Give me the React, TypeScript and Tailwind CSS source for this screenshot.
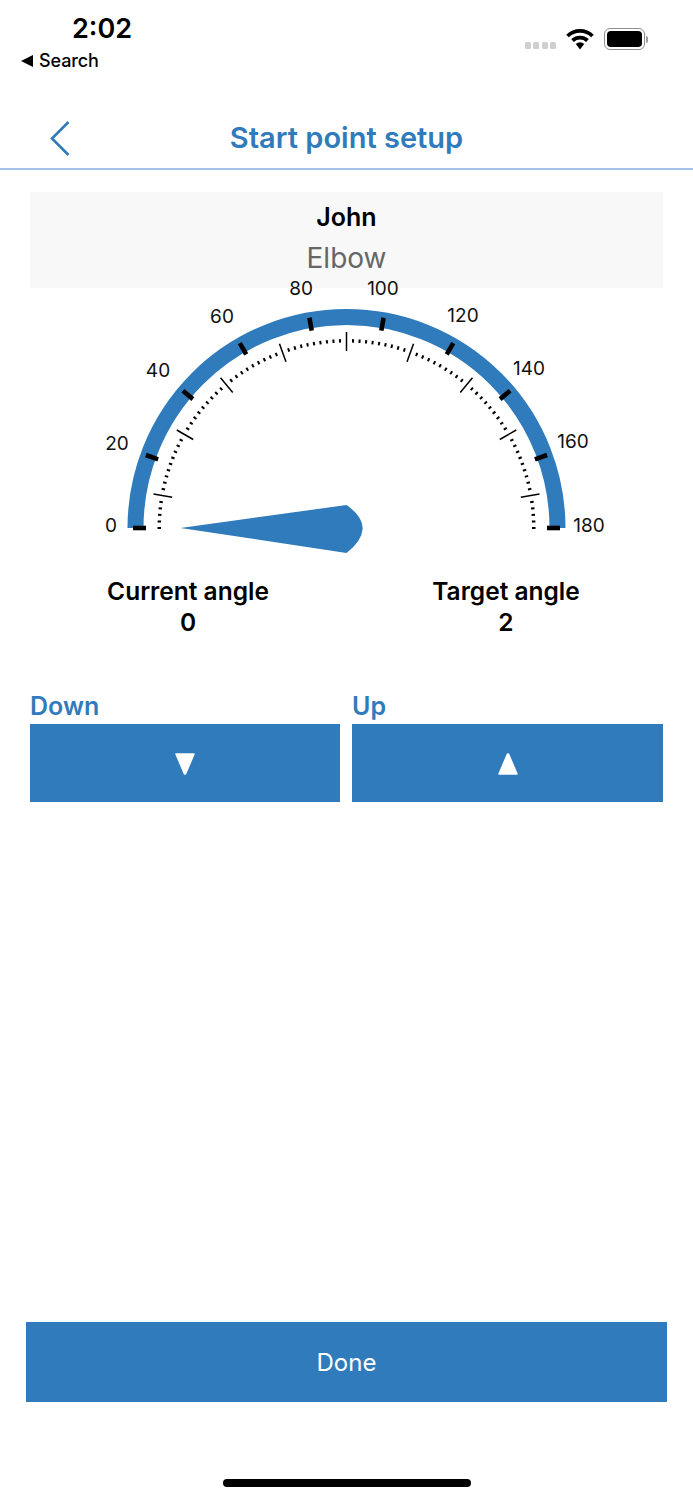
const CX = 346.5;
const CY = 528;

const polar = (deg: number, r: number) => {
  const a = (deg * Math.PI) / 180;
  return { x: CX - r * Math.cos(a), y: CY - r * Math.sin(a) };
};

const range = (n: number, step: number) =>
  Array.from({ length: Math.floor(n / step) + 1 }, (_, i) => i * step);

const labels = [
  { text: "0", x: 111, y: 525 },
  { text: "20", x: 117, y: 443 },
  { text: "40", x: 158, y: 370 },
  { text: "60", x: 222, y: 316 },
  { text: "80", x: 301, y: 288 },
  { text: "100", x: 383, y: 288 },
  { text: "120", x: 463, y: 315 },
  { text: "140", x: 529, y: 368 },
  { text: "160", x: 573, y: 441 },
  { text: "180", x: 589, y: 525 },
];

const Tick = ({ deg, from, to, width }: { deg: number; from: number; to: number; width: number }) => {
  const a = polar(deg, from);
  const b = polar(deg, to);
  return <line x1={a.x} y1={a.y} x2={b.x} y2={b.y} stroke="#000" strokeWidth={width} />;
};

const Gauge = () => (
  <svg width="693" height="280" viewBox="0 278 693 280" className="-mt-[10px] relative block">
    <path d={`M ${CX - 211} ${CY} A 211 211 0 0 1 ${CX + 211} ${CY}`} fill="none" stroke="#2f7bbb" strokeWidth="16" />
    {range(180, 20).map((d) => (
      <Tick key={d} deg={d} from={200.5} to={213.5} width={4.6} />
    ))}
    {range(180, 2)
      .filter((d) => (d - 10) % 20 !== 0)
      .map((d) => (
        <Tick key={d} deg={d} from={185.5} to={189} width={2} />
      ))}
    {range(160, 20).map((d) => (
      <Tick key={d} deg={d + 10} from={177} to={196} width={1.5} />
    ))}
    <path d="M 180.5 528 L 346.5 505 Q 362.5 516 362.7 528.5 Q 362 541 346.5 553 Z" fill="#2f7bbb" />
    {labels.map((l) => (
      <text key={l.text} x={l.x} y={l.y} dy="0.36em" textAnchor="middle" fontSize="19" fill="#111" fontFamily="Inter, sans-serif">
        {l.text}
      </text>
    ))}
  </svg>
);

const Reading = ({ label, value, className }: { label: string; value: number; className: string }) => (
  <div className={`text-center font-semibold text-[24.5px] leading-[31px] text-black ${className}`}>
    <div>{label}</div>
    <div>{value}</div>
  </div>
);

const StepButton = ({ label, children, className }: { label: string; children: React.ReactNode; className: string }) => (
  <div className={className}>
    <div className="h-[32px] text-[25px] leading-[28px] font-semibold text-[#2f7bbb]">{label}</div>
    <button type="button" className="flex h-[78px] w-full items-center justify-center bg-[#2f7bbb]">
      {children}
    </button>
  </div>
);

export default function App() {
  return (
    <div className="relative h-[1500px] w-[693px] overflow-hidden bg-white font-['Inter',sans-serif]">
      {/* status bar */}
      <div className="relative h-[92px]">
        <div className="pl-[72px] pt-[13px] text-[27px] leading-[32px] font-semibold text-black">2:02</div>
        <div className="flex items-center gap-[5px] pl-[20px] pt-[4px] text-[18px] leading-[24px] font-medium tracking-[-0.1px] text-black">
          <svg width="14" height="14" viewBox="0 0 14 14">
            <path d="M1 7 L13 1 V13 Z" fill="#000" />
          </svg>
          Search
        </div>
        <div className="absolute left-[525px] top-[28px] flex items-center">
          <div className="mr-[10px] mt-[13px] flex gap-[2.4px]">
            {[0, 1, 2, 3].map((i) => (
              <span key={i} className="h-[7px] w-[6px] rounded-[1.5px] bg-[#cfcfcf]" />
            ))}
          </div>
          <svg width="28" height="22" viewBox="0 0 28 22" className="mr-[10px]">
            <path d="M1.5 8 A18 18 0 0 1 26.5 8" fill="none" stroke="#000" strokeWidth="3.8" />
            <path d="M6.5 12.5 A11 11 0 0 1 21.5 12.5" fill="none" stroke="#000" strokeWidth="3.8" />
            <path d="M9.8 16 L14 21.5 L18.2 16 A6 6 0 0 0 9.8 16 Z" fill="#000" />
          </svg>
          <div className="flex items-center">
            <div className="flex h-[22px] w-[41px] rounded-[6px] border-[1.5px] border-[#8f8f8f] p-[2px]">
              <div className="h-full w-full rounded-[4px] bg-black" />
            </div>
            <div className="ml-[1px] h-[7px] w-[2px] rounded-r bg-[#9a9a9a]" />
          </div>
        </div>
      </div>

      {/* nav bar */}
      <div className="relative flex h-[78px] items-center justify-center border-b-2 border-[#a3c4e6]">
        <svg width="20" height="36" viewBox="0 0 20 36" className="absolute left-[50px] top-[29px]">
          <path d="M18.5 1 L2 17.5 L18.5 34" fill="none" stroke="#2f7bbb" strokeWidth="2.6" />
        </svg>
        <div className="mt-[16px] text-[29px] leading-[34px] font-semibold text-[#2f7bbb]">Start point setup</div>
      </div>

      {/* patient */}
      <div className="mx-[30px] mt-[22px] h-[96px] bg-[#f8f8f8] pt-[10px] text-center">
        <div className="text-[25px] leading-[31px] font-semibold text-black">John</div>
        <div className="mt-[8px] text-[28px] leading-[34px] text-[#666]">Elbow</div>
      </div>

      <Gauge />

      <div className="mt-[18px] flex">
        <Reading label="Current angle" value={0} className="ml-[104px] w-[168px]" />
        <Reading label="Target angle" value={2} className="ml-[160px] w-[148px]" />
      </div>

      <div className="ml-[30px] mt-[54px] flex gap-[12px]">
        <StepButton label="Down" className="w-[310px]">
          <svg width="22" height="24" viewBox="0 0 22 24" className="mt-[1px]">
            <path d="M2 2 H20 L11.5 22 H10.5 Z" fill="#fff" stroke="#fff" strokeWidth="1.5" strokeLinejoin="round" />
          </svg>
        </StepButton>
        <StepButton label="Up" className="w-[311px]">
          <svg width="22" height="24" viewBox="0 0 22 24" className="mt-[1px]">
            <path d="M2 22 H20 L11.5 2 H10.5 Z" fill="#fff" stroke="#fff" strokeWidth="1.5" strokeLinejoin="round" />
          </svg>
        </StepButton>
      </div>

      <button
        type="button"
        className="absolute bottom-[98px] left-[26px] flex h-[80px] w-[641px] items-center justify-center bg-[#2f7bbb] pt-[2px] text-[24px] text-white"
      >
        Done
      </button>

      <div className="absolute bottom-[13px] left-[223px] h-[8px] w-[248px] rounded-full bg-black" />
    </div>
  );
}
